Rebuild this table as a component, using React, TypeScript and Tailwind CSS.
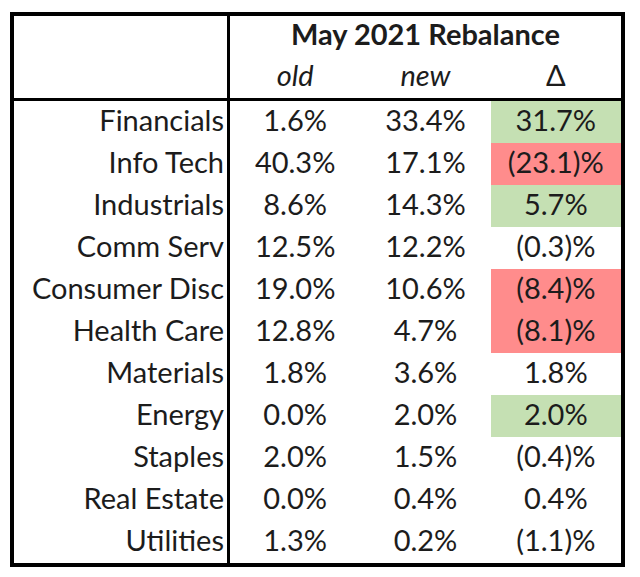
const rows = [
  { name: "Financials", old: "1.6%", nw: "33.4%", delta: "31.7%", tone: "green" },
  { name: "Info Tech", old: "40.3%", nw: "17.1%", delta: "(23.1)%", tone: "red" },
  { name: "Industrials", old: "8.6%", nw: "14.3%", delta: "5.7%", tone: "green" },
  { name: "Comm Serv", old: "12.5%", nw: "12.2%", delta: "(0.3)%", tone: "" },
  { name: "Consumer Disc", old: "19.0%", nw: "10.6%", delta: "(8.4)%", tone: "red" },
  { name: "Health Care", old: "12.8%", nw: "4.7%", delta: "(8.1)%", tone: "red" },
  { name: "Materials", old: "1.8%", nw: "3.6%", delta: "1.8%", tone: "" },
  { name: "Energy", old: "0.0%", nw: "2.0%", delta: "2.0%", tone: "green" },
  { name: "Staples", old: "2.0%", nw: "1.5%", delta: "(0.4)%", tone: "" },
  { name: "Real Estate", old: "0.0%", nw: "0.4%", delta: "0.4%", tone: "" },
  { name: "Utilities", old: "1.3%", nw: "0.2%", delta: "(1.1)%", tone: "" },
];

const toneClass = (tone: string) => {
  if (tone === "green") return "bg-[#c5e0b3]";
  if (tone === "red") return "bg-[#ff8c8c]";
  return "";
};

export default function App() {
  return (
    <div className="w-[640px] h-[577px] bg-white pt-[12px] pl-[10px] font-['Lato',sans-serif] text-[29px] leading-none text-[#1c1c1c]">
      <div className="w-[615px] border-4 border-black">
        {/* header */}
        <div className="flex h-[85px] border-b-[3px] border-black">
          <div className="w-[216px] border-r-[3px] border-black" />
          <div className="flex-1 flex flex-col">
            <div className="h-[41px] flex items-center justify-center pb-[6px] font-bold">May 2021 Rebalance</div>
            <div className="h-[41px] grid grid-cols-3 items-center text-center italic pb-[6px]">
              <span>old</span>
              <span>new</span>
              <span className="not-italic">Δ</span>
            </div>
          </div>
        </div>

        {/* body */}
        <div className="flex">
          <div className="w-[216px] border-r-[3px] border-black">
            {rows.map((r) => (
              <div key={r.name} className="h-[42px] flex items-center justify-end pr-[3px] pb-[6px]">
                {r.name}
              </div>
            ))}
          </div>
          <div className="flex-1">
            {rows.map((r) => (
              <div key={r.name} className="h-[42px] grid grid-cols-3 items-stretch text-center">
                <span className="flex items-center justify-center pb-[6px]">{r.old}</span>
                <span className="flex items-center justify-center pb-[6px]">{r.nw}</span>
                <span className={`flex items-center justify-center pb-[6px] ${toneClass(r.tone)}`}>{r.delta}</span>
              </div>
            ))}
          </div>
        </div>
      </div>
    </div>
  );
}
